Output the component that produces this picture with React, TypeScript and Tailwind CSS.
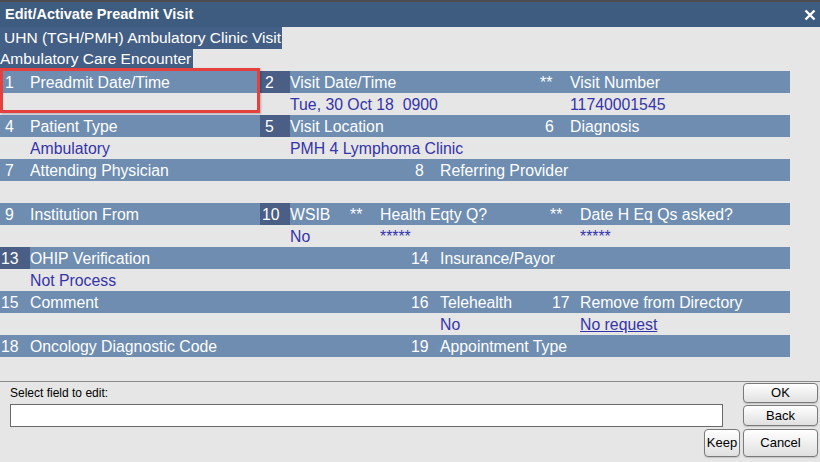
import React from "react";

const F = { fontFamily: '"Liberation Sans", Arial, sans-serif' };

type Seg = { w: number; num?: string; dark?: boolean; label?: string; pad?: number };

function HeaderRow({ segs }: { segs: Seg[] }) {
  return (
    <div className="flex h-[22px] w-[790px] bg-[#6e8db1] text-[15.8px] leading-[23px] text-white">
      {segs.map((s, i) =>
        s.num !== undefined ? (
          <div
            key={i}
            className={s.dark ? "h-full bg-[#4b5e86] whitespace-pre" : "h-full whitespace-pre"}
            style={{ width: s.w, paddingLeft: s.pad ?? 5 }}
          >
            {s.num}
          </div>
        ) : (
          <div key={i} className="h-full whitespace-pre" style={{ width: s.w }}>
            {s.label}
          </div>
        )
      )}
    </div>
  );
}

type V = { x: number; text: string; underline?: boolean };

function ValueRow({ vals }: { vals: V[] }) {
  return (
    <div className="relative h-[22px] w-[790px] text-[15.8px] leading-[23px] text-[#3434ac]">
      {vals.map((v, i) => (
        <span
          key={i}
          className={v.underline ? "absolute top-0 whitespace-pre underline" : "absolute top-0 whitespace-pre"}
          style={{ left: v.x }}
        >
          {v.text}
        </span>
      ))}
    </div>
  );
}

function Btn({ children, className }: { children: React.ReactNode; className: string }) {
  return (
    <div
      className={
        "flex items-center justify-center rounded-[4px] border border-[#7a7a7a] bg-gradient-to-b from-[#ffffff] to-[#e0e0e0] text-[13px] text-black shadow-[0_1px_1px_rgba(0,0,0,0.15)] " +
        className
      }
    >
      {children}
    </div>
  );
}

export default function App() {
  return (
    <div className="relative h-[462px] w-[820px] overflow-hidden bg-[#e6e6e6]" style={F}>
      {/* title bar */}
      <div className="flex h-[27px] items-center justify-between border-t-2 border-[#4d4d4f] bg-[#3e5b80] pl-[5px] pr-[4px]">
        <span className="text-[14.5px] font-bold text-white">Edit/Activate Preadmit Visit</span>
        <svg width="12" height="12" viewBox="0 0 12 12">
          <path d="M1.5 1.5 L10.5 10.5 M10.5 1.5 L1.5 10.5" stroke="white" strokeWidth="2.4" />
        </svg>
      </div>

      <div className="flex h-[22px] w-[282px] items-center whitespace-pre bg-[#445f85] pl-[4px] text-[15.5px] text-white">
        UHN (TGH/PMH) Ambulatory Clinic Visit
      </div>
      <div className="flex h-[20px] w-[193px] items-center whitespace-pre bg-[#445f85] text-[15.5px] text-white">
        Ambulatory Care Encounter
      </div>

      <div className="mt-[2px]">
        <HeaderRow
          segs={[
            { w: 30, num: "1" },
            { w: 230, label: "Preadmit Date/Time" },
            { w: 30, num: "2", dark: true },
            { w: 250, label: "Visit Date/Time" },
            { w: 30, num: "**", pad: 0 },
            { w: 220, label: "Visit Number" },
          ]}
        />
        <ValueRow
          vals={[
            { x: 290, text: "Tue, 30 Oct 18  0900" },
            { x: 570, text: "11740001545" },
          ]}
        />
        <HeaderRow
          segs={[
            { w: 30, num: "4" },
            { w: 230, label: "Patient Type" },
            { w: 30, num: "5", dark: true },
            { w: 250, label: "Visit Location" },
            { w: 30, num: "6" },
            { w: 220, label: "Diagnosis" },
          ]}
        />
        <ValueRow
          vals={[
            { x: 30, text: "Ambulatory" },
            { x: 290, text: "PMH 4 Lymphoma Clinic" },
          ]}
        />
        <HeaderRow
          segs={[
            { w: 30, num: "7" },
            { w: 380, label: "Attending Physician" },
            { w: 30, num: "8" },
            { w: 350, label: "Referring Provider" },
          ]}
        />
        <ValueRow vals={[]} />
        <HeaderRow
          segs={[
            { w: 30, num: "9" },
            { w: 230, label: "Institution From" },
            { w: 30, num: "10", dark: true, pad: 2 },
            { w: 60, label: "WSIB" },
            { w: 30, num: "**", pad: 0 },
            { w: 170, label: "Health Eqty Q?" },
            { w: 30, num: "**", pad: 0 },
            { w: 210, label: "Date H Eq Qs asked?" },
          ]}
        />
        <ValueRow
          vals={[
            { x: 290, text: "No" },
            { x: 380, text: "*****" },
            { x: 580, text: "*****" },
          ]}
        />
        <HeaderRow
          segs={[
            { w: 30, num: "13", dark: true, pad: 1 },
            { w: 380, label: "OHIP Verification" },
            { w: 30, num: "14", pad: 1 },
            { w: 350, label: "Insurance/Payor" },
          ]}
        />
        <ValueRow vals={[{ x: 30, text: "Not Process" }]} />
        <HeaderRow
          segs={[
            { w: 30, num: "15", pad: 1 },
            { w: 380, label: "Comment" },
            { w: 30, num: "16", pad: 1 },
            { w: 110, label: "Telehealth" },
            { w: 30, num: "17", pad: 2 },
            { w: 210, label: "Remove from Directory" },
          ]}
        />
        <ValueRow
          vals={[
            { x: 440, text: "No" },
            { x: 580, text: "No request", underline: true },
          ]}
        />
        <HeaderRow
          segs={[
            { w: 30, num: "18", pad: 1 },
            { w: 380, label: "Oncology Diagnostic Code" },
            { w: 30, num: "19", pad: 1 },
            { w: 350, label: "Appointment Type" },
          ]}
        />
        <ValueRow vals={[]} />
      </div>

      {/* selection outline */}
      <div className="pointer-events-none absolute left-0 top-[68px] h-[45px] w-[260px] border-[3px] border-[#e6403e] shadow-[1px_1px_2px_rgba(0,0,0,0.25)]" />

      {/* bottom panel */}
      <div className="mt-[2px] flex border-t border-[#8a8a8a] pt-[1px]">
        <div className="flex w-[743px] flex-col pl-[10px] pr-[3px]">
          <div className="mt-[3px] h-[14px] text-[12px] leading-[14px] text-black">Select field to edit:</div>
          <div className="mt-[4px] h-[23px] w-[713px] border border-[#6a6a6a] bg-white" />
          <div className="mt-[2px] flex justify-end">
            <Btn className="h-[28px] w-[36px]">Keep</Btn>
          </div>
        </div>
        <div className="flex w-[75px] flex-col gap-[2px]">
          <Btn className="h-[20px]">OK</Btn>
          <Btn className="h-[21px]">Back</Btn>
          <Btn className="mt-[1px] h-[28px]">Cancel</Btn>
        </div>
      </div>
    </div>
  );
}
